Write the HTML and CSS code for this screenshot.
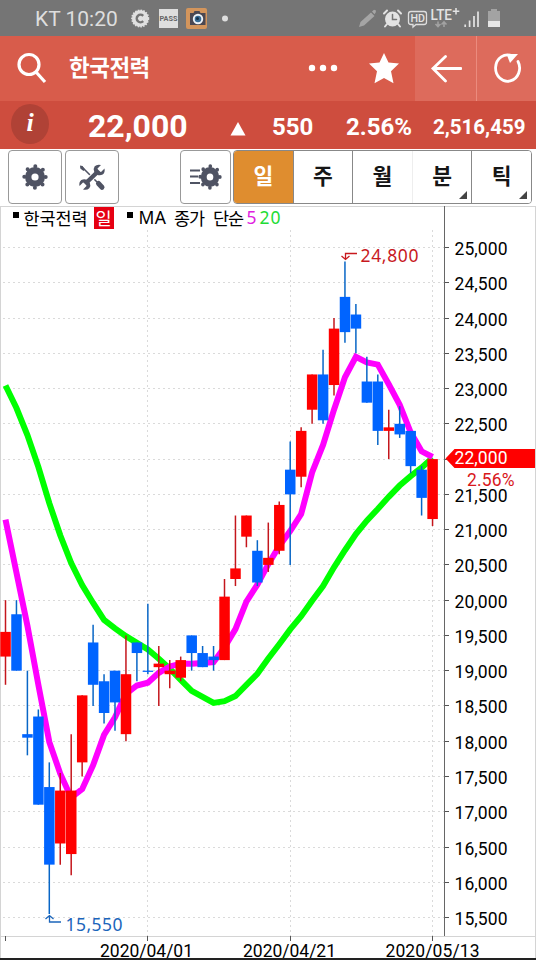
FILE: index.html
```html
<!DOCTYPE html>
<html lang="ko">
<head>
    <meta charset="UTF-8">
    <meta name="viewport" content="width=device-width, initial-scale=1.0">
    <title>한국전력</title>
    <link rel="stylesheet" href="styles.css">
</head>
<body>
    <div class="status-bar">
        <span class="carrier">KT 10:20</span>
        <svg class="status-left" width="104" height="36" viewBox="128 0 104 36">
            <circle cx="140.2" cy="18.5" r="8.300" fill="#e0e0e0" stroke="#e0e0e0" stroke-width="1.500" stroke-dasharray="1.6 1.2" />
            <path d="M143.200 15.800a3.800 3.800 0 1 0 0 5.400" fill="none" stroke="#757575" stroke-width="2.400" />
            <rect x="159" y="9" width="19" height="19" fill="#dedede" />
            <text class="pass" x="168.5" y="21" textLength="18" lengthAdjust="spacingAndGlyphs">PASS</text>
            <rect x="186" y="8" width="21" height="21" rx="2" fill="#d3955c" />
            <path d="M190 13h3.500l1-2h5l1 2h5v12h-15.500z" fill="#4b4852" />
            <circle cx="198" cy="19" r="5.200" fill="#eef3f7" />
            <circle cx="198" cy="19" r="3.300" fill="#376b94" />
            <circle cx="197.500" cy="18.500" r="1.500" fill="#172f47" />
            <circle cx="225" cy="18.500" r="3" fill="#dedede" />
        </svg>
        <svg class="status-right" width="146" height="36" viewBox="356 0 146 36">
            <path d="M359 27l1.500-5L371 12.500l3.500 3.500L364 25.500zM372 11.500l2-1.800 2 .8-.3 2-1.200 1.800z" fill="#a5a5a5" />
            <g stroke="#e3e3e3" fill="none" stroke-width="2" stroke-linecap="round">
                <circle cx="392.500" cy="19" r="6.500" fill="#e3e3e3" />
                <path d="M384 13.500l3-3M401 13.500l-3-3M387 24l-2 2.500M398 24l2 2.500" />
                <path d="M392.500 14.500v5h4" stroke="#757575" stroke-width="1.500" />
            </g>
            <path d="M411 11.500h13q2.500 0 2.500 2.500v8q0 2.500-2.500 2.500h-8l-3 2.500v-2.500h-2q-2.500 0-2.500-2.500v-8q0-2.500 2.500-2.500z" fill="none" stroke="#dedede" stroke-width="1.300" />
            <text class="hd" x="410.500" y="22.300" textLength="14.500" lengthAdjust="spacingAndGlyphs">HD</text>
            <text class="lte" x="430.500" y="20" textLength="21.500" lengthAdjust="spacingAndGlyphs">LTE</text>
            <path d="M456 8v6.500M452.700 11.200h6.600" stroke="#e3e3e3" stroke-width="1.500" />
            <path d="M438 21.500v5M435.500 24l2.500 2.500 2.500-2.500M444 27v-5M441.500 24.500l2.500-2.500 2.500 2.500" fill="none" stroke="#a2a2a2" stroke-width="1.600" />
            <path d="M465.200 24.500v2.500M469.600 20.500v6.500M474 16v11M478 11.500v15.500" stroke="#e3e3e3" stroke-width="1.700" />
            <path d="M488 11h3v-2h6v2h3v10h-12z" fill="#a3a3a3" />
            <rect x="488" y="21" width="12" height="6" fill="#e6e6e6" />
        </svg>
    </div>

    <div class="title-bar">
        <svg class="search" width="32" height="34" viewBox="0 0 32 34">
            <circle cx="13" cy="12.500" r="10" />
            <path d="M20 20l9 10" />
        </svg>
        <h1>한국전력</h1>
        <svg class="more" width="30" height="10" viewBox="0 0 30 10">
            <circle cx="4" cy="4" r="3.200" /><circle cx="15" cy="4" r="3.200" /><circle cx="26" cy="4" r="3.200" />
        </svg>
        <svg class="star" width="32" height="32" viewBox="0 0 32 32">
            <path d="M16 0l4.500 9.500 10.500 1-8 7.700 2.500 12L16 25 6.500 30.200l2.500-12L1 10.500l10.500-1z" />
        </svg>
        <div class="nav-button">
            <svg width="32" height="32" viewBox="0 0 32 32"><path d="M15.500 3.500L3 15.500l12.500 12.500M3 15.500h28" /></svg>
        </div>
        <div class="nav-button">
            <svg width="32" height="32" viewBox="0 0 32 32"><path d="M20 2.800A12 13.200 0 1 0 26 8.500" /><path class="tip" d="M14.500 1h11.500l-8 9z" /></svg>
        </div>
    </div>

    <div class="price-bar">
        <div class="info">i</div>
        <span class="price">22,000</span>
        <svg class="up" width="16" height="14" viewBox="0 0 16 14"><path d="M8 0l7.500 13.500h-15z" /></svg>
        <span class="change">550</span>
        <span class="rate">2.56%</span>
        <span class="volume">2,516,459</span>
    </div>

    <div class="toolbar">
        <button class="tool">
            <svg width="26" height="28" viewBox="-13 -14 26 28"><use href="#gear" /></svg>
        </button>
        <button class="tool">
            <svg width="28" height="28" viewBox="0 0 28 28">
                <path d="M3.500 3.500l18 18" stroke-width="1.600" />
                <path d="M2 2.500l2.500.5 2.500 3.500-1.500 1.500-3.200-2.500z" stroke="none" fill="#4f5363" />
                <path d="M20.500 20.500l3.500 3.800" stroke-width="5" stroke-linecap="round" />
                <path d="M7 21L21 7.500" stroke="#fff" stroke-width="6.500" />
                <path d="M7 21L21 7.500" stroke-width="4.400" />
                <path d="M23 2l-3.500 3.500.5 3 3 .5 3.500-3.500q.8 4-1.800 6-2.700 1.500-5.500.3l-3-3q-1.300-3 .5-5.500 2.300-2.300 6.300-1.300zM5 26.500l3.500-3.500-.5-3-3-.5-3.500 3.500q-.8-4 1.800-6 2.700-1.500 5.500-.3l3 3q1.300 3-.5 5.500-2.300 2.300-6.300 1.300z" stroke="none" fill="#4f5363" />
            </svg>
        </button>
        <button class="tool list">
            <svg width="34" height="28" viewBox="-21 -14 34 28">
                <path d="M-20-6.500h10M-20-.5h8M-20 6h10" stroke-width="2" />
                <g transform="scale(.92 1)">
                    <g id="gear">
                        <circle r="10" fill="#4f5363" />
                        <circle r="10.700" stroke-width="4" stroke-dasharray="0 8.404" stroke-linecap="round" />
                        <circle r="3.600" fill="#fff" />
                    </g>
                </g>
            </svg>
        </button>
        <div class="periods">
            <button class="active">일</button>
            <button>주</button>
            <button class="joined">월</button>
            <button class="menu">분</button>
            <button class="menu">틱</button>
        </div>
    </div>

    <svg id="chart" width="536" height="754" viewBox="0 206 536 754">
        <path d="M0 206.500h536M.5 206v752M535.500 206v752M0 936.500h536" stroke="#d4d4d4" />
        <g id="grid"></g>
        <path d="M444.500 206v730" stroke="#666" />
        <path d="M5.500 936v5M147.500 936v5M290.500 936v5M432.500 936v5" stroke="#555" />
        <g id="averages"></g>
        <g id="candles"></g>

        <!-- Legend -->
        <g class="legend">
            <rect x="13" y="212" width="6" height="6" />
            <text x="23.500" y="224.500" textLength="64">한국전력</text>
            <rect x="94" y="207" width="20" height="22" fill="#e60012" />
            <text x="95.500" y="224.500" fill="#fff">일</text>
            <rect x="127" y="212" width="6" height="6" />
            <text class="latin" x="138.500" y="224" textLength="27.500">MA</text>
            <text x="174" y="224.500" textLength="31">종가</text>
            <text x="213" y="224.500" textLength="31">단순</text>
            <text class="latin" x="246.500" y="224" fill="#e020e0">5</text>
            <text class="latin" x="259.500" y="224" fill="#22dc35" textLength="21">20</text>
        </g>

        <!-- High and low markers -->
        <g fill="none" stroke="#c8191e" stroke-width="1.300">
            <path d="M341.500 256l4 3.500 4-3.500M345.500 259v-5.500h11.500" />
            <path d="M45.500 919l4-3.500 4 3.500M49.500 916v6h11.500" stroke="#1b65bb" />
        </g>
        <text class="mark high" x="360.500" y="262" textLength="58">24,800</text>
        <text class="mark low" x="65.500" y="931" textLength="57">15,550</text>

        <g id="prices" class="axis"></g>
        <path d="M445.500 458.500l9-9.500h80.500v19h-80.500z" fill="#f00" />
        <text class="axis" x="454.500" y="464" fill="#fff" textLength="53">22,000</text>
        <text class="axis" x="467" y="486" fill="#d8171b" textLength="47.500">2.56%</text>

        <g class="axis">
            <text x="100" y="957" textLength="93">2020/04/01</text>
            <text x="243" y="957" textLength="93">2020/04/21</text>
            <text x="385.500" y="957" textLength="94">2020/05/13</text>
        </g>
        <rect y="958" width="536" height="2" fill="#222" />
    </svg>
    <script src="chart.js"></script>
</body>
</html>
```
FILE: styles.css
```css
* {
    box-sizing: border-box;
}

body {
    width: 536px;
    height: 960px;
    margin: 0;
    overflow: hidden;
    background: #fff;
    font-family: Roboto, "Noto Sans CJK KR", sans-serif;
}

svg {
    display: block;
    flex: none;
}

.status-bar {
    display: flex;
    align-items: center;
    height: 36px;
    padding-left: 35px;
    background: #757575;
    color: #dedede;
}

.carrier {
    width: 93px;
    padding-top: 2px;
    font-size: 21px;
    white-space: nowrap;
}

.status-right {
    margin-left: 124px;
}

.pass {
    font-size: 7.5px;
    font-weight: 700;
    text-anchor: middle;
    fill: #666;
}

.hd {
    font-size: 11px;
    font-weight: 500;
    fill: #e3e3e3;
}

.lte {
    font-size: 14px;
    font-weight: 500;
    fill: #e3e3e3;
}

.title-bar {
    display: flex;
    align-items: center;
    height: 65px;
    padding-left: 16px;
    background: #d85c4b;
    color: #fff;
}

.search {
    fill: none;
    stroke: #fff;
    stroke-width: 3.2;
}

h1 {
    width: 238px;
    margin: 0 0 2px 21px;
    font-size: 22.5px;
    line-height: 30px;
    letter-spacing: -0.5px;
}

.more,
.star {
    fill: #fff;
}

.more {
    margin-left: 1px;
}

.star {
    margin: 0 15px 0 30px;
}

.nav-button {
    display: flex;
    align-items: center;
    justify-content: center;
    width: 61px;
    height: 65px;
    background: #dd6b5c;
}

.nav-button + .nav-button {
    width: 60px;
    padding-left: 3px;
    border-left: 1px solid #eb8b7e;
}

.nav-button svg {
    fill: none;
    stroke: #fff;
    stroke-width: 2.8;
    stroke-linecap: round;
}

.nav-button .tip {
    fill: #fff;
    stroke: none;
}

.price-bar {
    display: flex;
    align-items: center;
    height: 48px;
    padding-left: 11px;
    background: #ce4d3e;
    color: #fff;
    font-weight: 700;
    white-space: nowrap;
}

.info {
    width: 38px;
    height: 40px;
    margin-bottom: 2px;
    border-radius: 50%;
    background: #b04236;
    font: italic bold 26px/38px "Liberation Serif", serif;
    text-align: center;
}

.price {
    width: 142px;
    padding: 2px 0 0 39px;
    font-size: 32px;
}

.up {
    width: 16px;
    margin: 8px 0 0 39px;
    fill: #fff;
}

.change,
.rate {
    padding-top: 4px;
    font-size: 24px;
}

.change {
    width: 74px;
    margin-left: 26px;
}

.rate {
    width: 87px;
}

.volume {
    padding-top: 4px;
    font-size: 20.5px;
}

.toolbar {
    display: flex;
    height: 57px;
    padding: 1px 0 0 8px;
    background: #fff;
}

button {
    padding: 0;
    border: 0;
    background: #fff;
    font: bold 21.5px/30px "Noto Sans CJK KR", sans-serif;
    color: #161616;
}

.tool {
    display: flex;
    align-items: center;
    justify-content: center;
    width: 54px;
    height: 54px;
    margin-right: 3px;
    border: 1px solid #999;
    border-radius: 4px;
}

.tool svg {
    fill: none;
    stroke: #4f5363;
}

.tool circle[fill] {
    stroke: none;
}

.list {
    width: 51px;
    margin-left: 58px;
}

.periods {
    display: flex;
    width: 299px;
    height: 54px;
    margin-left: -1px;
    overflow: hidden;
    border: 1px solid #888;
    border-radius: 4px;
}

.periods button {
    position: relative;
    flex: 1;
    padding-bottom: 5px;
    border-right: 1px solid #888;
}

.periods .active {
    background: #df8d2f;
    color: #fff;
}

.periods .joined {
    border-color: #eee;
}

.periods button:last-child {
    border: 0;
}

.menu::after {
    content: "";
    position: absolute;
    right: 4px;
    bottom: 4px;
    border-bottom: 8px solid #444;
    border-left: 8px solid transparent;
}

.legend {
    font-family: "Noto Sans CJK KR", sans-serif;
    font-size: 17.5px;
}

.latin {
    font-family: "Noto Sans", sans-serif;
    font-size: 17.5px;
}

.axis {
    font-size: 17.5px;
}

.mark {
    font-family: "Noto Sans", sans-serif;
    font-size: 17.5px;
}

.high {
    fill: #c8191e;
}

.low {
    fill: #1b65bb;
}
```
FILE: chart.js
```js
// open, high, low, close
const candles = [
    [19200, 20000, 18800, 19550], [19800, 20000, 19000, 19000], [18100, 19000, 17800, 18050], [18350, 18450, 17100, 17100],
    [17350, 17700, 15550, 16250], [16550, 17550, 16250, 17300], [16400, 18100, 16100, 17300], [17700, 18650, 17500, 18650],
    [19400, 19650, 18500, 18800], [18850, 18950, 18250, 18400], [19000, 19000, 18150, 18550], [18100, 19500, 18000, 18950],
    [19400, 19400, 18850, 19250], [19000, 19950, 18950, 19000], [19050, 19350, 18500, 19100], [18950, 19150, 18750, 19000],
    [18900, 19200, 18850, 19150], [19500, 19500, 19000, 19250], [19250, 19350, 19050, 19050], [19200, 19350, 19000, 19150],
    [19150, 20300, 19150, 20050], [20300, 21200, 20200, 20450], [20900, 21200, 20750, 21200], [20700, 20850, 20200, 20250],
    [20500, 21100, 20400, 20600], [20700, 21400, 20650, 21350], [21850, 22250, 20500, 21500], [21750, 22450, 21600, 22400],
    [22700, 23200, 22500, 23200], [23200, 23550, 22500, 22550], [23050, 24000, 22900, 23850], [24300, 24800, 23650, 23800],
    [24050, 24200, 23500, 23850], [23100, 23450, 22800, 22800], [23100, 23200, 22200, 22400], [22400, 22700, 22000, 22450],
    [22500, 22750, 22300, 22350], [22400, 22400, 21800, 21900], [21850, 21900, 21200, 21450], [21150, 22000, 21050, 22000]
];

// Averages for the days that need closes from before the first candle
const early5 = [21143, 20390, 19640, 18800];
const early20 = [23043, 22724, 22340, 21890, 21375, 20920, 20525, 20213, 19960, 19720,
    19600, 19490, 19395, 19300, 19170, 19030, 18870, 18715, 18630];

const x = i => 5.5 + i * 10.95;
const y = price => 247.5 + (25000 - price) * 0.07053;

function draw(parent, name, attrs, text) {
    const node = document.createElementNS('http://www.w3.org/2000/svg', name);
    for (const key in attrs) node.setAttribute(key, attrs[key]);
    if (text) node.textContent = text;
    document.getElementById(parent).appendChild(node);
}

function average(days, early, color) {
    const points = candles.map((c, i) => {
        let value = early[i];
        if (i >= days - 1) {
            value = candles.slice(i - days + 1, i + 1).reduce((sum, d) => sum + d[3], 0) / days;
        }
        return x(i) + ',' + y(value);
    });
    draw('averages', 'polyline', { points: points.join(' '), fill: 'none', stroke: color, 'stroke-width': 6 });
}

// Grid and price axis
for (let price = 25000; price >= 15500; price -= 500) {
    const top = Math.floor(y(price)) + 0.5;
    draw('grid', 'path', { d: `M3 ${top}H444`, stroke: '#dadada', 'stroke-dasharray': '2 3' });
    draw('grid', 'path', { d: `M444 ${top}h5`, stroke: '#555' });
    if (price !== 22000) {
        draw('prices', 'text', { x: 454.5, y: top + 7, textLength: 53 }, price.toLocaleString('en-US'));
    }
}
[147.5, 290.5, 432.5].forEach(left => {
    draw('grid', 'path', { d: `M${left} 230V936`, stroke: '#dadada', 'stroke-dasharray': '2 3' });
});

average(20, early20, '#00ff00');
average(5, early5, '#ff00ff');

candles.forEach(([open, high, low, close], i) => {
    const up = close > open;
    const top = y(Math.max(open, close));
    const height = Math.max(1.2, y(Math.min(open, close)) - top);
    const left = Math.max(0, x(i) - 5.2);
    draw('candles', 'path', { d: `M${x(i)} ${y(high)}V${y(low)}`, stroke: up ? '#c4161c' : '#0866c6', 'stroke-width': 1.5 });
    draw('candles', 'rect', { x: left, y: top, width: 10.5, height, fill: up ? '#ff0000' : '#0064ff' });
});
```
